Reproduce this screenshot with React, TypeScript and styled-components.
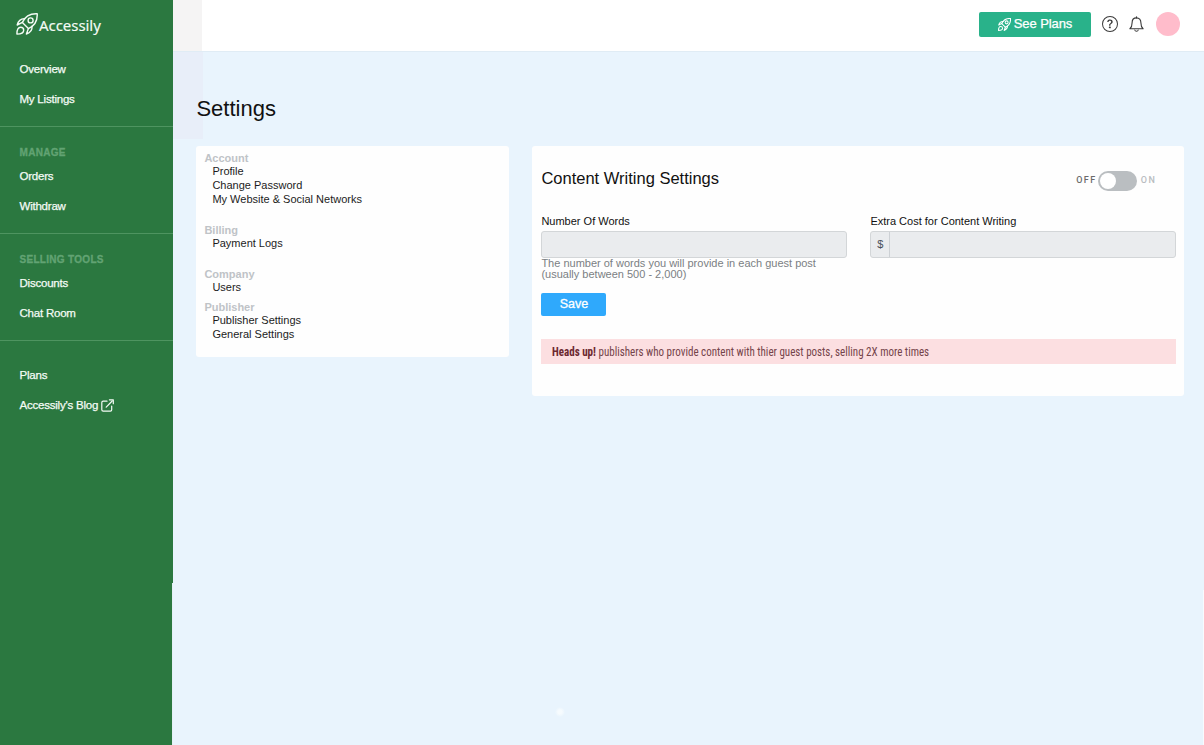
import React from "react";
import styled, { createGlobalStyle } from "styled-components";
import { BsQuestionCircle } from "react-icons/bs";

const GlobalStyle = createGlobalStyle`
  * { box-sizing: border-box; }
  body {
    margin: 0;
    background: #e9f4fd;
    font-family: "Liberation Sans", Arial, sans-serif;
    color: #111;
    overflow: hidden;
  }
`;

const Page = styled.div`
  display: flex;
  height: 745px;
  width: 1204px;
`;

const Sidebar = styled.nav`
  width: 173px;
  flex: none;
  background:
    linear-gradient(#e4f0f5, #e4f0f5) right bottom / 1px 162px no-repeat,
    #2b7840;
  color: #f4fbf5;
`;

const Logo = styled.div`
  display: flex;
  align-items: center;
  height: 52px;
  padding: 0 0 4px 16px;
  font: 15px/20px "Noto Sans", sans-serif;
  letter-spacing: -0.05px;
  -webkit-text-stroke: 0.15px currentColor;
  svg { display: block; }
  span { margin: 1px 0 0 1px; }
`;

const NavGroup = styled.div<{ $height: number; $top: number }>`
  height: ${(p) => p.$height}px;
  padding: ${(p) => p.$top}px 0 0 19.5px;
  border-bottom: 1px solid #4e9460;
  &:last-child { border-bottom: 0; }
`;

const NavHeading = styled.div`
  height: 21px;
  font-size: 10px;
  line-height: 12px;
  font-weight: 700;
  letter-spacing: 0.3px;
  color: #62a373;
  -webkit-text-stroke: 0.3px currentColor;
`;

const NavItem = styled.a`
  display: flex;
  align-items: center;
  gap: 3px;
  height: 30px;
  padding-bottom: 14px;
  font-size: 11.5px;
  line-height: 16px;
  letter-spacing: -0.22px;
  -webkit-text-stroke: 0.25px currentColor;
  white-space: nowrap;
`;

const Main = styled.main`
  flex: 1;
  min-width: 0;
`;

const TopBar = styled.header`
  height: 52px;
  display: flex;
  align-items: center;
  justify-content: flex-end;
  padding: 0 24px 4px 0;
  border-bottom: 1px solid #e0ecf5;
  color: #3a3a3a;
  background: linear-gradient(90deg, #f5f4f4 29px, #fff 29px);
`;

const PlansButton = styled.button`
  display: flex;
  align-items: center;
  justify-content: center;
  gap: 3px;
  width: 112px;
  height: 25px;
  margin: 1px 11px 0 0;
  padding: 0;
  border: 0;
  border-radius: 2px;
  background: #29b28a;
  color: #fff;
  font: 13px/16px "Liberation Sans", sans-serif;
  letter-spacing: -0.08px;
  -webkit-text-stroke: 0.25px currentColor;
`;

const BellSvg = styled.svg`
  display: block;
  margin: 0 12px 0 11px;
`;

const Avatar = styled.div`
  width: 24px;
  height: 24px;
  border-radius: 50%;
  background: #ffbccb;
`;

const Content = styled.div`
  height: 693px;
  padding: 43px 20px 0 23.4px;
  background:
    linear-gradient(#e8eef9, #e8eef9) 0 0 / 30px 87px no-repeat,
    linear-gradient(#f8fbfe, #f8fbfe) right bottom / 1px 155px no-repeat,
    radial-gradient(circle at 387px 660px, #f6fbfe 2px, transparent 5px);
`;

const Title = styled.h1`
  margin: 0;
  height: 51px;
  font-size: 22px;
  line-height: 28px;
  font-weight: 400;
`;

const Columns = styled.div`
  display: flex;
  align-items: flex-start;
  gap: 23px;
`;

const Card = styled.section<{ $width: number; $height: number }>`
  width: ${(p) => p.$width}px;
  height: ${(p) => p.$height}px;
  flex: none;
  padding: 5px 8px 0 8px;
  border-radius: 3px;
  background: #fefefe;
`;

const MenuGroup = styled.div<{ $height: number }>`
  height: ${(p) => p.$height}px;
`;

const MenuHeading = styled.div`
  font-size: 11px;
  line-height: 14px;
  height: 13px;
  font-weight: 700;
  color: #bfc3c7;
`;

const MenuItem = styled.a`
  display: block;
  padding-left: 8px;
  font-size: 11px;
  line-height: 14px;
  color: #1c1c1c;
`;

const CardHeader = styled.div`
  display: flex;
  justify-content: space-between;
  align-items: center;
  height: 58px;
  padding: 0 20px 0 1px;
`;

const CardTitle = styled.h2`
  margin: 0 0 4px;
  font-size: 16.5px;
  line-height: 20px;
  font-weight: 400;
`;

const SwitchRow = styled.div`
  display: flex;
  align-items: center;
  margin-top: 2px;
  font: 500 9px/10px Roboto, sans-serif;
  letter-spacing: 1.5px;
`;

const SwitchLabel = styled.span<{ $on?: boolean }>`
  margin-top: -2px;
  color: ${(p) => (p.$on ? "#6b6b6b" : "#b9bcc0")};
`;

const Track = styled.div`
  width: 39px;
  height: 20px;
  margin: 0 4px 0 1px;
  padding: 2px;
  border-radius: 10px;
  background: #babec1;
`;

const Knob = styled.div`
  width: 16px;
  height: 16px;
  border-radius: 50%;
  background: #fff;
`;

const Fields = styled.div`
  display: flex;
  gap: 23px;
  height: 84px;
  padding: 5px 0 0 1px;
`;

const Field = styled.label`
  display: block;
  width: 306px;
`;

const FieldLabel = styled.span`
  display: block;
  height: 17px;
  font-size: 11px;
  line-height: 14px;
`;

const InputBox = styled.span`
  display: flex;
  height: 27px;
  border: 1px solid #d3d6d8;
  border-radius: 3px;
  background: #eaecee;
`;

const Prefix = styled.span`
  width: 19px;
  border-right: 1px solid #cdd1d5;
  text-align: center;
  font-size: 11px;
  line-height: 25px;
  color: #4a5058;
`;

const Hint = styled.span`
  display: block;
  font-size: 11px;
  line-height: 10.5px;
  color: #7b7f83;
`;

const SaveButton = styled.button`
  display: block;
  width: 65px;
  height: 23px;
  margin-left: 1px;
  padding: 0;
  border: 0;
  border-radius: 2px;
  background: #2fa9fc;
  color: #fff;
  font: 12.5px/23px "Liberation Sans", sans-serif;
  -webkit-text-stroke: 0.3px currentColor;
`;

const Alert = styled.div`
  height: 25px;
  margin: 23.4px 0 0 1px;
  padding: 1px 0 0 11px;
  background: #fcdfe1;
  color: #75444a;
  font: 12px/25px "Roboto Condensed", Roboto, sans-serif;
  font-stretch: 75%;
`;

const AlertText = styled.span`
  display: inline-block;
  white-space: nowrap;
  transform: scaleX(0.917);
  transform-origin: left center;
  b { color: #6c2830; }
`;

const MENU = [
  { title: "Account", height: 72, items: ["Profile", "Change Password", "My Website & Social Networks"] },
  { title: "Billing", height: 44, items: ["Payment Logs"] },
  { title: "Company", height: 33, items: ["Users"] },
  { title: "Publisher", height: 44, items: ["Publisher Settings", "General Settings"] },
];

function Rocket({ size, weight }: { size: number; weight: number }) {
  return (
    <svg
      width={size}
      height={size}
      viewBox="0 0 22 22"
      fill="none"
      stroke="currentColor"
      strokeWidth={weight}
      strokeLinejoin="round"
      strokeLinecap="round"
    >
      <path d="M21.2 0.8C14.8 0.5 9.4 2.6 6.4 9.4L12.4 15.6C19.4 12.4 21.6 7.2 21.2 0.8Z" />
      <circle cx="14.6" cy="7.4" r="2.5" />
      <path d="M8.8 5.8C4.6 5.6 2.2 8.2 1.2 12L6.4 9.4" />
      <path d="M16 13.2C16.4 17.4 13.8 19.8 10.4 21L12.4 15.6" />
      <path d="M0.9 21.1C0.9 17.6 1.6 14.3 4.6 14.3C6.4 14.3 7.7 15.6 7.7 17.3C7.7 20.2 4.4 21.1 0.9 21.1Z" />
    </svg>
  );
}

function Bell() {
  return (
    <BellSvg width="15" height="16" viewBox="0 0 15 16" fill="none" stroke="currentColor" strokeWidth="1.1" strokeLinejoin="round" strokeLinecap="round">
      <path d="M7.5 0.7V1.9" />
      <path d="M0.9 12.8H14.1C12.5 11.5 11.9 9.8 11.9 6.8C11.9 3.8 10.2 1.9 7.5 1.9S3.1 3.8 3.1 6.8C3.1 9.8 2.5 11.5 0.9 12.8Z" />
      <path d="M5.8 14C6 14.9 6.6 15.3 7.5 15.3S9 14.9 9.2 14" />
    </BellSvg>
  );
}

function ExternalLink() {
  return (
    <svg width="13" height="13" viewBox="0 0 13 13" fill="none" stroke="currentColor" strokeWidth="1.2" strokeLinejoin="round" strokeLinecap="round">
      <path d="M6 2.2H2.2C1.3 2.2 0.8 2.7 0.8 3.5V10.8C0.8 11.6 1.3 12.1 2.2 12.1H9.4C10.2 12.1 10.7 11.6 10.7 10.8V7" />
      <path d="M5.2 8.2L11.2 2" />
      <path d="M8.4 0.8H12.3V4.7" />
    </svg>
  );
}

export default function App() {
  return (
    <Page>
      <GlobalStyle />
      <Sidebar>
        <Logo>
          <Rocket size={22} weight={1.4} />
          <span>Accessily</span>
        </Logo>
        <NavGroup $height={75} $top={9}>
          <NavItem>Overview</NavItem>
          <NavItem>My Listings</NavItem>
        </NavGroup>
        <NavGroup $height={107} $top={20}>
          <NavHeading>MANAGE</NavHeading>
          <NavItem>Orders</NavItem>
          <NavItem>Withdraw</NavItem>
        </NavGroup>
        <NavGroup $height={107} $top={20}>
          <NavHeading>SELLING TOOLS</NavHeading>
          <NavItem>Discounts</NavItem>
          <NavItem>Chat Room</NavItem>
        </NavGroup>
        <NavGroup $height={100} $top={26}>
          <NavItem>Plans</NavItem>
          <NavItem>
            Accessily's Blog <ExternalLink />
          </NavItem>
        </NavGroup>
      </Sidebar>
      <Main>
        <TopBar>
          <PlansButton>
            <Rocket size={13} weight={1.8} /> See Plans
          </PlansButton>
          <BsQuestionCircle size={16} />
          <Bell />
          <Avatar />
        </TopBar>
        <Content>
          <Title>Settings</Title>
          <Columns>
            <Card $width={313} $height={211}>
              {MENU.map((group) => (
                <MenuGroup key={group.title} $height={group.height}>
                  <MenuHeading>{group.title}</MenuHeading>
                  {group.items.map((item) => (
                    <MenuItem key={item}>{item}</MenuItem>
                  ))}
                </MenuGroup>
              ))}
            </Card>
            <Card $width={652} $height={250}>
              <CardHeader>
                <CardTitle>Content Writing Settings</CardTitle>
                <SwitchRow>
                  <SwitchLabel $on>OFF</SwitchLabel>
                  <Track>
                    <Knob />
                  </Track>
                  <SwitchLabel>ON</SwitchLabel>
                </SwitchRow>
              </CardHeader>
              <Fields>
                <Field>
                  <FieldLabel>Number Of Words</FieldLabel>
                  <InputBox />
                  <Hint>
                    The number of words you will provide in each guest post
                    <br />
                    (usually between 500 - 2,000)
                  </Hint>
                </Field>
                <Field>
                  <FieldLabel>Extra Cost for Content Writing</FieldLabel>
                  <InputBox>
                    <Prefix>$</Prefix>
                  </InputBox>
                </Field>
              </Fields>
              <SaveButton>Save</SaveButton>
              <Alert>
                <AlertText>
                  <b>Heads up!</b> publishers who provide content with thier guest posts, selling 2X more times
                </AlertText>
              </Alert>
            </Card>
          </Columns>
        </Content>
      </Main>
    </Page>
  );
}
